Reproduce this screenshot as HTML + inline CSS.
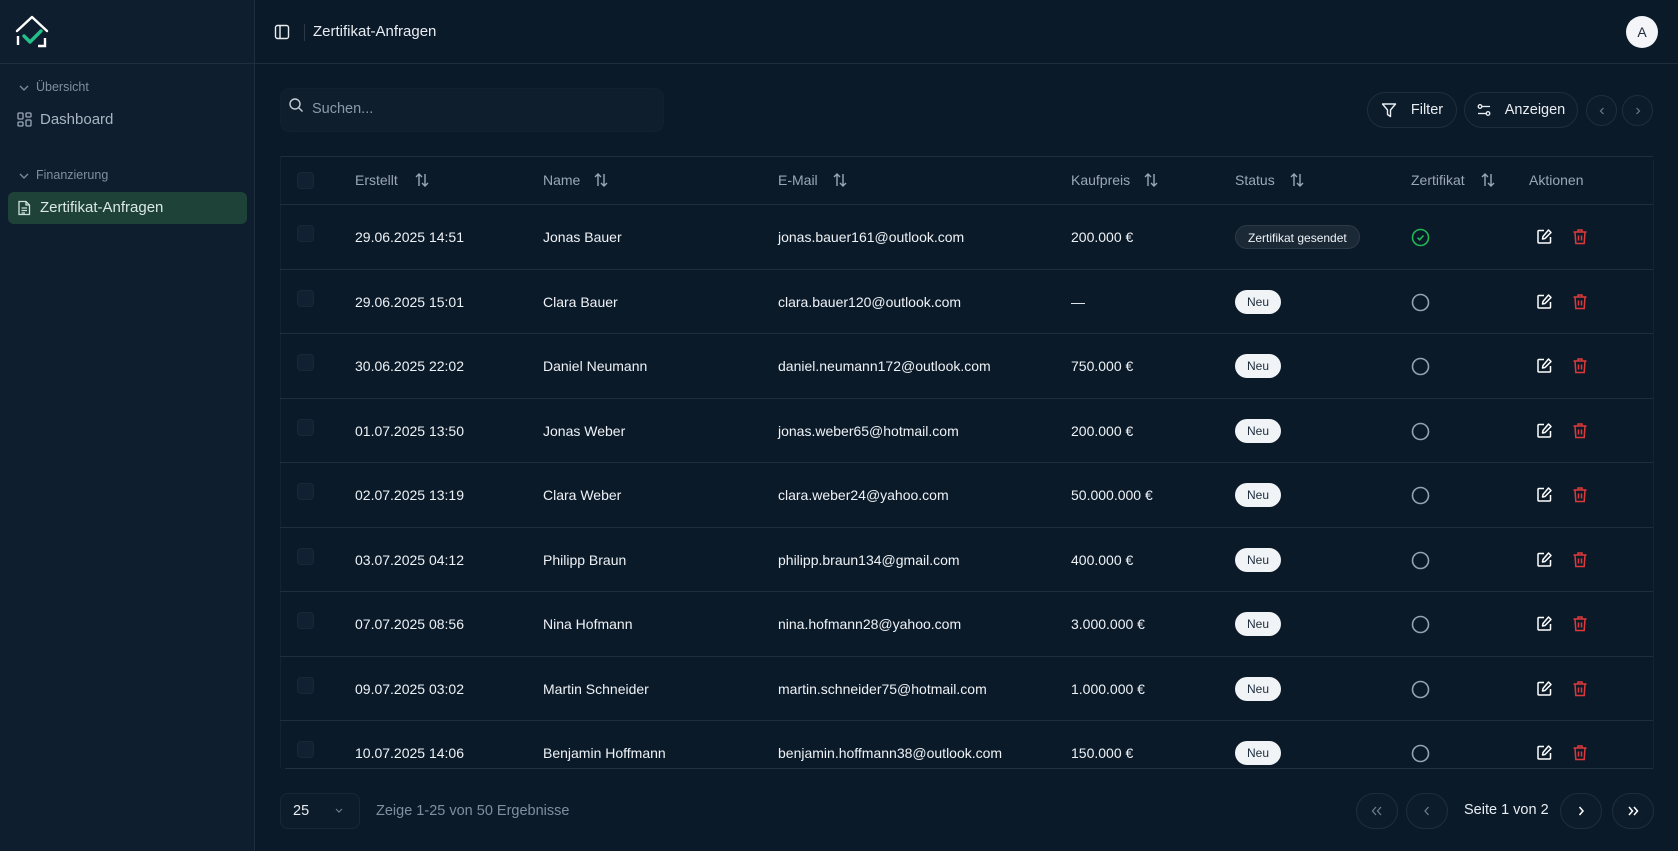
<!DOCTYPE html>
<html><head><meta charset="utf-8"><style>
*{box-sizing:border-box;margin:0;padding:0}
body{width:1678px;height:851px;background:#0b1a29;font-family:"Liberation Sans",sans-serif;color:#e8edf2;position:relative;overflow:hidden;font-size:14px}
.a{position:absolute}
.side{left:0;top:0;width:255px;height:851px;background:#0f1e2e;border-right:1px solid #1f2d3c}
.hdr{left:255px;top:0;right:0;height:64px;border-bottom:1px solid #1f2d3c}
.sline{left:0;top:63px;width:255px;height:1px;background:#1f2d3c}
.muted{color:#7f8ea0}
.btn{border:1px solid #1f2e3e;border-radius:18px;background:#0d1c2b;display:flex;align-items:center;justify-content:center}
.th{top:156px;height:48px;line-height:48px;color:#9aa7b6;font-size:14px}
.row{left:280px;width:1373px;height:64.5px;border-bottom:1px solid #1f2d3c}
.cell{top:0;height:64px;line-height:64px;font-size:14px;color:#eef2f6}
.cb{width:17px;height:17px;border-radius:4px;background:#122131;border:1px solid #182838}
.badge{background:#f1f4f7;color:#1d2b3a;border-radius:12px;height:24px;line-height:24px;padding:0 12px;font-size:12px;top:20px}
</style></head><body>
<div class="a side"></div>
<div class="a sline"></div>
<div class="a hdr"></div>
<svg class="a" style="left:14px;top:14px" width="36" height="36" viewBox="0 0 36 36" fill="none">
<path d="M3 17 L18 3 L33 17" stroke="#fff" stroke-width="2.4" stroke-linecap="round" stroke-linejoin="round"/>
<path d="M4 22 V31" stroke="#fff" stroke-width="2.4"/>
<path d="M31 24 V32 H24" stroke="#fff" stroke-width="2.4"/>
<path d="M10 22 L16 28 L27 17" stroke="#22c08a" stroke-width="3.4" stroke-linecap="round" stroke-linejoin="round"/>
</svg>
<svg class="a" style="left:18px;top:83px" width="12" height="10" viewBox="0 0 12 10"><path d="M2 3 L6 7 L10 3" stroke="#7f8ea0" stroke-width="1.3" fill="none"/></svg>
<div class="a muted" style="left:36px;top:80px;font-size:12.5px">Übersicht</div>
<svg class="a" style="left:17px;top:112px" width="15" height="15" viewBox="0 0 15 15" fill="none" stroke="#9aa7b6" stroke-width="1.3"><rect x="1" y="1" width="5" height="6" rx="1"/><rect x="9" y="1" width="5" height="4" rx="1"/><rect x="1" y="10" width="5" height="4" rx="1"/><rect x="9" y="8" width="5" height="6" rx="1"/></svg>
<div class="a" style="left:40px;top:111px;font-size:15px;color:#a9b5c2">Dashboard</div>
<svg class="a" style="left:18px;top:171px" width="12" height="10" viewBox="0 0 12 10"><path d="M2 3 L6 7 L10 3" stroke="#7f8ea0" stroke-width="1.3" fill="none"/></svg>
<div class="a muted" style="left:36px;top:168px;font-size:12.5px">Finanzierung</div>
<div class="a" style="left:8px;top:192px;width:239px;height:32px;background:#1e4238;border-radius:6px"></div>
<svg class="a" style="left:17px;top:200px" width="14" height="16" viewBox="0 0 14 16" fill="none" stroke="#cfe0da" stroke-width="1.3"><path d="M2 1.5 H9 L12.5 5 V14.5 H2 Z"/><path d="M9 1.5 V5 H12.5"/><path d="M4.5 8 H10 M4.5 10.5 H10 M4.5 13 H8"/></svg>
<div class="a" style="left:40px;top:199px;font-size:15px;color:#dbe8e3">Zertifikat-Anfragen</div>
<svg class="a" style="left:274px;top:24px" width="16" height="16" viewBox="0 0 16 16" fill="none" stroke="#e8edf2" stroke-width="1.4"><rect x="1.5" y="1.5" width="13" height="13" rx="2"/><path d="M6 1.5 V14.5"/></svg>
<div class="a" style="left:304px;top:24px;width:1px;height:17px;background:#2a3848"></div>
<div class="a" style="left:313px;top:23px;font-size:15px">Zertifikat-Anfragen</div>
<div class="a" style="left:1626px;top:16px;width:32px;height:32px;border-radius:50%;background:#f3f5f8;color:#1d2b3a;font-size:14px;text-align:center;line-height:32px">A</div>
<div class="a" style="left:280px;top:88px;width:384px;height:44px;background:#0f1e2d;border-radius:9px;border:1px solid #112131"></div>
<svg class="a" style="left:288px;top:97px" width="16" height="16" viewBox="0 0 16 16" fill="none" stroke="#c3ccd6" stroke-width="1.4"><circle cx="7" cy="7" r="5"/><path d="M11 11 L14.5 14.5"/></svg>
<div class="a" style="left:312px;top:101px;color:#8c99a8;font-size:14.5px">Suchen...</div>
<div class="a btn" style="left:1367px;top:92px;width:90px;height:36px;gap:14px;font-size:14.5px"><svg width="16" height="16" viewBox="0 0 16 16" fill="none" stroke="#e8edf2" stroke-width="1.4" stroke-linejoin="round"><path d="M1.5 2 H14.5 L9.5 8 V14.5 L6.5 12.5 V8 Z"/></svg>Filter</div>
<div class="a btn" style="left:1464px;top:92px;width:114px;height:36px;gap:14px;font-size:14.5px"><svg width="14" height="14" viewBox="0 0 14 14" fill="none" stroke="#e8edf2" stroke-width="1.3"><circle cx="3" cy="3.5" r="1.8"/><path d="M5 3.5 H13"/><circle cx="11" cy="10.5" r="1.8"/><path d="M1 10.5 H9"/></svg>Anzeigen</div>
<div class="a btn" style="left:1586px;top:95px;width:31px;height:31px"><svg width="10" height="10" viewBox="0 0 10 10"><path d="M6.5 2 L3.5 5 L6.5 8" stroke="#6c7a8a" stroke-width="1.2" fill="none"/></svg></div>
<div class="a btn" style="left:1622px;top:95px;width:31px;height:31px"><svg width="10" height="10" viewBox="0 0 10 10"><path d="M3.5 2 L6.5 5 L3.5 8" stroke="#6c7a8a" stroke-width="1.2" fill="none"/></svg></div>
<div class="a" style="left:280px;top:156px;width:1373px;height:1px;background:#1f2d3c"></div>
<div class="a" style="left:280px;top:156px;width:1px;height:612px;background:#15232f"></div>
<div class="a" style="left:1653px;top:160px;width:1px;height:608px;background:#15232f"></div>
<div class="a" style="left:280px;top:204px;width:1373px;height:1px;background:#1f2d3c"></div>
<div class="a cb" style="left:297px;top:172px"></div>
<div class="a th" style="left:355px">Erstellt</div>
<div class="a th" style="left:543px">Name</div>
<div class="a th" style="left:778px">E-Mail</div>
<div class="a th" style="left:1071px">Kaufpreis</div>
<div class="a th" style="left:1235px">Status</div>
<div class="a th" style="left:1411px">Zertifikat</div>
<div class="a th" style="left:1529px">Aktionen</div>
<svg class="a" style="left:414px;top:172px" width="16" height="16" viewBox="0 0 16 16" fill="none" stroke="#9aa7b6" stroke-width="1.4"><path d="M5 14 V2 M2 5 L5 2 L8 5 M11 2 V14 M8 11 L11 14 L14 11"/></svg>
<svg class="a" style="left:593px;top:172px" width="16" height="16" viewBox="0 0 16 16" fill="none" stroke="#9aa7b6" stroke-width="1.4"><path d="M5 14 V2 M2 5 L5 2 L8 5 M11 2 V14 M8 11 L11 14 L14 11"/></svg>
<svg class="a" style="left:832px;top:172px" width="16" height="16" viewBox="0 0 16 16" fill="none" stroke="#9aa7b6" stroke-width="1.4"><path d="M5 14 V2 M2 5 L5 2 L8 5 M11 2 V14 M8 11 L11 14 L14 11"/></svg>
<svg class="a" style="left:1143px;top:172px" width="16" height="16" viewBox="0 0 16 16" fill="none" stroke="#9aa7b6" stroke-width="1.4"><path d="M5 14 V2 M2 5 L5 2 L8 5 M11 2 V14 M8 11 L11 14 L14 11"/></svg>
<svg class="a" style="left:1289px;top:172px" width="16" height="16" viewBox="0 0 16 16" fill="none" stroke="#9aa7b6" stroke-width="1.4"><path d="M5 14 V2 M2 5 L5 2 L8 5 M11 2 V14 M8 11 L11 14 L14 11"/></svg>
<svg class="a" style="left:1480px;top:172px" width="16" height="16" viewBox="0 0 16 16" fill="none" stroke="#9aa7b6" stroke-width="1.4"><path d="M5 14 V2 M2 5 L5 2 L8 5 M11 2 V14 M8 11 L11 14 L14 11"/></svg>

<div class="a" style="left:280px;top:205px;width:1373px;height:563px;overflow:hidden">
<div style="position:relative">
<div class="a row" style="left:0;top:0"><div class="a cb" style="left:17px;top:20px"></div><div class="a cell" style="left:75px">29.06.2025 14:51</div><div class="a cell" style="left:263px">Jonas Bauer</div><div class="a cell" style="left:498px">jonas.bauer161@outlook.com</div><div class="a cell" style="left:791px">200.000 €</div><div class="a badge" style="left:955px;background:#1b2937;color:#eef2f6;border:1px solid #2c3a48">Zertifikat gesendet</div><svg class="a" style="left:1131px;top:23px" width="19" height="19" viewBox="0 0 19 19" fill="none" stroke="#1fb855" stroke-width="1.6"><circle cx="9.5" cy="9.5" r="8"/><path d="M6.5 9.7 L8.7 11.7 L12.5 7.5"/></svg><svg class="a" style="left:1256px;top:23px" width="17" height="17" viewBox="0 0 17 17" fill="none" stroke="#fff" stroke-width="1.5" stroke-linejoin="round"><path d="M8 2.5 H3 A1 1 0 0 0 2 3.5 V14 A1 1 0 0 0 3 15 H13.5 A1 1 0 0 0 14.5 14 V9"/><path d="M12.5 2 L15 4.5 L9 10.5 L6.5 11 L7 8.5 Z"/></svg><svg class="a" style="left:1292px;top:23px" width="16" height="17" viewBox="0 0 16 17" fill="none" stroke="#dc3a3a" stroke-width="1.5"><path d="M1.5 4 H14.5 M6 4 V2 H10 V4 M3 4 L3.8 15.5 H12.2 L13 4 M6.5 7.5 V12.5 M9.5 7.5 V12.5"/></svg></div>
<div class="a row" style="left:0;top:64.5px"><div class="a cb" style="left:17px;top:20px"></div><div class="a cell" style="left:75px">29.06.2025 15:01</div><div class="a cell" style="left:263px">Clara Bauer</div><div class="a cell" style="left:498px">clara.bauer120@outlook.com</div><div class="a cell" style="left:791px">—</div><div class="a badge" style="left:955px">Neu</div><svg class="a" style="left:1131px;top:23px" width="19" height="19" viewBox="0 0 19 19" fill="none" stroke="#94a3b0" stroke-width="1.6"><circle cx="9.5" cy="9.5" r="8"/></svg><svg class="a" style="left:1256px;top:23px" width="17" height="17" viewBox="0 0 17 17" fill="none" stroke="#fff" stroke-width="1.5" stroke-linejoin="round"><path d="M8 2.5 H3 A1 1 0 0 0 2 3.5 V14 A1 1 0 0 0 3 15 H13.5 A1 1 0 0 0 14.5 14 V9"/><path d="M12.5 2 L15 4.5 L9 10.5 L6.5 11 L7 8.5 Z"/></svg><svg class="a" style="left:1292px;top:23px" width="16" height="17" viewBox="0 0 16 17" fill="none" stroke="#dc3a3a" stroke-width="1.5"><path d="M1.5 4 H14.5 M6 4 V2 H10 V4 M3 4 L3.8 15.5 H12.2 L13 4 M6.5 7.5 V12.5 M9.5 7.5 V12.5"/></svg></div>
<div class="a row" style="left:0;top:129px"><div class="a cb" style="left:17px;top:20px"></div><div class="a cell" style="left:75px">30.06.2025 22:02</div><div class="a cell" style="left:263px">Daniel Neumann</div><div class="a cell" style="left:498px">daniel.neumann172@outlook.com</div><div class="a cell" style="left:791px">750.000 €</div><div class="a badge" style="left:955px">Neu</div><svg class="a" style="left:1131px;top:23px" width="19" height="19" viewBox="0 0 19 19" fill="none" stroke="#94a3b0" stroke-width="1.6"><circle cx="9.5" cy="9.5" r="8"/></svg><svg class="a" style="left:1256px;top:23px" width="17" height="17" viewBox="0 0 17 17" fill="none" stroke="#fff" stroke-width="1.5" stroke-linejoin="round"><path d="M8 2.5 H3 A1 1 0 0 0 2 3.5 V14 A1 1 0 0 0 3 15 H13.5 A1 1 0 0 0 14.5 14 V9"/><path d="M12.5 2 L15 4.5 L9 10.5 L6.5 11 L7 8.5 Z"/></svg><svg class="a" style="left:1292px;top:23px" width="16" height="17" viewBox="0 0 16 17" fill="none" stroke="#dc3a3a" stroke-width="1.5"><path d="M1.5 4 H14.5 M6 4 V2 H10 V4 M3 4 L3.8 15.5 H12.2 L13 4 M6.5 7.5 V12.5 M9.5 7.5 V12.5"/></svg></div>
<div class="a row" style="left:0;top:193.5px"><div class="a cb" style="left:17px;top:20px"></div><div class="a cell" style="left:75px">01.07.2025 13:50</div><div class="a cell" style="left:263px">Jonas Weber</div><div class="a cell" style="left:498px">jonas.weber65@hotmail.com</div><div class="a cell" style="left:791px">200.000 €</div><div class="a badge" style="left:955px">Neu</div><svg class="a" style="left:1131px;top:23px" width="19" height="19" viewBox="0 0 19 19" fill="none" stroke="#94a3b0" stroke-width="1.6"><circle cx="9.5" cy="9.5" r="8"/></svg><svg class="a" style="left:1256px;top:23px" width="17" height="17" viewBox="0 0 17 17" fill="none" stroke="#fff" stroke-width="1.5" stroke-linejoin="round"><path d="M8 2.5 H3 A1 1 0 0 0 2 3.5 V14 A1 1 0 0 0 3 15 H13.5 A1 1 0 0 0 14.5 14 V9"/><path d="M12.5 2 L15 4.5 L9 10.5 L6.5 11 L7 8.5 Z"/></svg><svg class="a" style="left:1292px;top:23px" width="16" height="17" viewBox="0 0 16 17" fill="none" stroke="#dc3a3a" stroke-width="1.5"><path d="M1.5 4 H14.5 M6 4 V2 H10 V4 M3 4 L3.8 15.5 H12.2 L13 4 M6.5 7.5 V12.5 M9.5 7.5 V12.5"/></svg></div>
<div class="a row" style="left:0;top:258px"><div class="a cb" style="left:17px;top:20px"></div><div class="a cell" style="left:75px">02.07.2025 13:19</div><div class="a cell" style="left:263px">Clara Weber</div><div class="a cell" style="left:498px">clara.weber24@yahoo.com</div><div class="a cell" style="left:791px">50.000.000 €</div><div class="a badge" style="left:955px">Neu</div><svg class="a" style="left:1131px;top:23px" width="19" height="19" viewBox="0 0 19 19" fill="none" stroke="#94a3b0" stroke-width="1.6"><circle cx="9.5" cy="9.5" r="8"/></svg><svg class="a" style="left:1256px;top:23px" width="17" height="17" viewBox="0 0 17 17" fill="none" stroke="#fff" stroke-width="1.5" stroke-linejoin="round"><path d="M8 2.5 H3 A1 1 0 0 0 2 3.5 V14 A1 1 0 0 0 3 15 H13.5 A1 1 0 0 0 14.5 14 V9"/><path d="M12.5 2 L15 4.5 L9 10.5 L6.5 11 L7 8.5 Z"/></svg><svg class="a" style="left:1292px;top:23px" width="16" height="17" viewBox="0 0 16 17" fill="none" stroke="#dc3a3a" stroke-width="1.5"><path d="M1.5 4 H14.5 M6 4 V2 H10 V4 M3 4 L3.8 15.5 H12.2 L13 4 M6.5 7.5 V12.5 M9.5 7.5 V12.5"/></svg></div>
<div class="a row" style="left:0;top:322.5px"><div class="a cb" style="left:17px;top:20px"></div><div class="a cell" style="left:75px">03.07.2025 04:12</div><div class="a cell" style="left:263px">Philipp Braun</div><div class="a cell" style="left:498px">philipp.braun134@gmail.com</div><div class="a cell" style="left:791px">400.000 €</div><div class="a badge" style="left:955px">Neu</div><svg class="a" style="left:1131px;top:23px" width="19" height="19" viewBox="0 0 19 19" fill="none" stroke="#94a3b0" stroke-width="1.6"><circle cx="9.5" cy="9.5" r="8"/></svg><svg class="a" style="left:1256px;top:23px" width="17" height="17" viewBox="0 0 17 17" fill="none" stroke="#fff" stroke-width="1.5" stroke-linejoin="round"><path d="M8 2.5 H3 A1 1 0 0 0 2 3.5 V14 A1 1 0 0 0 3 15 H13.5 A1 1 0 0 0 14.5 14 V9"/><path d="M12.5 2 L15 4.5 L9 10.5 L6.5 11 L7 8.5 Z"/></svg><svg class="a" style="left:1292px;top:23px" width="16" height="17" viewBox="0 0 16 17" fill="none" stroke="#dc3a3a" stroke-width="1.5"><path d="M1.5 4 H14.5 M6 4 V2 H10 V4 M3 4 L3.8 15.5 H12.2 L13 4 M6.5 7.5 V12.5 M9.5 7.5 V12.5"/></svg></div>
<div class="a row" style="left:0;top:387px"><div class="a cb" style="left:17px;top:20px"></div><div class="a cell" style="left:75px">07.07.2025 08:56</div><div class="a cell" style="left:263px">Nina Hofmann</div><div class="a cell" style="left:498px">nina.hofmann28@yahoo.com</div><div class="a cell" style="left:791px">3.000.000 €</div><div class="a badge" style="left:955px">Neu</div><svg class="a" style="left:1131px;top:23px" width="19" height="19" viewBox="0 0 19 19" fill="none" stroke="#94a3b0" stroke-width="1.6"><circle cx="9.5" cy="9.5" r="8"/></svg><svg class="a" style="left:1256px;top:23px" width="17" height="17" viewBox="0 0 17 17" fill="none" stroke="#fff" stroke-width="1.5" stroke-linejoin="round"><path d="M8 2.5 H3 A1 1 0 0 0 2 3.5 V14 A1 1 0 0 0 3 15 H13.5 A1 1 0 0 0 14.5 14 V9"/><path d="M12.5 2 L15 4.5 L9 10.5 L6.5 11 L7 8.5 Z"/></svg><svg class="a" style="left:1292px;top:23px" width="16" height="17" viewBox="0 0 16 17" fill="none" stroke="#dc3a3a" stroke-width="1.5"><path d="M1.5 4 H14.5 M6 4 V2 H10 V4 M3 4 L3.8 15.5 H12.2 L13 4 M6.5 7.5 V12.5 M9.5 7.5 V12.5"/></svg></div>
<div class="a row" style="left:0;top:451.5px"><div class="a cb" style="left:17px;top:20px"></div><div class="a cell" style="left:75px">09.07.2025 03:02</div><div class="a cell" style="left:263px">Martin Schneider</div><div class="a cell" style="left:498px">martin.schneider75@hotmail.com</div><div class="a cell" style="left:791px">1.000.000 €</div><div class="a badge" style="left:955px">Neu</div><svg class="a" style="left:1131px;top:23px" width="19" height="19" viewBox="0 0 19 19" fill="none" stroke="#94a3b0" stroke-width="1.6"><circle cx="9.5" cy="9.5" r="8"/></svg><svg class="a" style="left:1256px;top:23px" width="17" height="17" viewBox="0 0 17 17" fill="none" stroke="#fff" stroke-width="1.5" stroke-linejoin="round"><path d="M8 2.5 H3 A1 1 0 0 0 2 3.5 V14 A1 1 0 0 0 3 15 H13.5 A1 1 0 0 0 14.5 14 V9"/><path d="M12.5 2 L15 4.5 L9 10.5 L6.5 11 L7 8.5 Z"/></svg><svg class="a" style="left:1292px;top:23px" width="16" height="17" viewBox="0 0 16 17" fill="none" stroke="#dc3a3a" stroke-width="1.5"><path d="M1.5 4 H14.5 M6 4 V2 H10 V4 M3 4 L3.8 15.5 H12.2 L13 4 M6.5 7.5 V12.5 M9.5 7.5 V12.5"/></svg></div>
<div class="a row" style="left:0;top:516px"><div class="a cb" style="left:17px;top:20px"></div><div class="a cell" style="left:75px">10.07.2025 14:06</div><div class="a cell" style="left:263px">Benjamin Hoffmann</div><div class="a cell" style="left:498px">benjamin.hoffmann38@outlook.com</div><div class="a cell" style="left:791px">150.000 €</div><div class="a badge" style="left:955px">Neu</div><svg class="a" style="left:1131px;top:23px" width="19" height="19" viewBox="0 0 19 19" fill="none" stroke="#94a3b0" stroke-width="1.6"><circle cx="9.5" cy="9.5" r="8"/></svg><svg class="a" style="left:1256px;top:23px" width="17" height="17" viewBox="0 0 17 17" fill="none" stroke="#fff" stroke-width="1.5" stroke-linejoin="round"><path d="M8 2.5 H3 A1 1 0 0 0 2 3.5 V14 A1 1 0 0 0 3 15 H13.5 A1 1 0 0 0 14.5 14 V9"/><path d="M12.5 2 L15 4.5 L9 10.5 L6.5 11 L7 8.5 Z"/></svg><svg class="a" style="left:1292px;top:23px" width="16" height="17" viewBox="0 0 16 17" fill="none" stroke="#dc3a3a" stroke-width="1.5"><path d="M1.5 4 H14.5 M6 4 V2 H10 V4 M3 4 L3.8 15.5 H12.2 L13 4 M6.5 7.5 V12.5 M9.5 7.5 V12.5"/></svg></div>
</div></div>
<div class="a" style="left:285px;top:768px;width:1368px;height:1px;background:#22303f"></div>
<div class="a" style="left:280px;top:793px;width:80px;height:36px;border:1px solid #182838;border-radius:8px;background:#0d1c2b"></div>
<div class="a" style="left:293px;top:803px;font-size:14.5px">25</div>
<svg class="a" style="left:333px;top:806px" width="12" height="10" viewBox="0 0 12 10"><path d="M3 3 L6 6 L9 3" stroke="#6c7a8a" stroke-width="1.2" fill="none"/></svg>
<div class="a" style="left:376px;top:803px;font-size:14.5px;color:#7f8ea0">Zeige 1-25 von 50 Ergebnisse</div>
<div class="a btn" style="left:1356px;top:793px;width:42px;height:36px"><svg width="14" height="12" viewBox="0 0 14 12" fill="none" stroke="#6c7a8a" stroke-width="1.3"><path d="M6 2 L2.5 6 L6 10 M11 2 L7.5 6 L11 10"/></svg></div>
<div class="a btn" style="left:1406px;top:793px;width:42px;height:36px"><svg width="10" height="12" viewBox="0 0 10 12"><path d="M6.5 2 L3 6 L6.5 10" stroke="#6c7a8a" stroke-width="1.3" fill="none"/></svg></div>
<div class="a" style="left:1464px;top:802px;font-size:14.5px">Seite 1 von 2</div>
<div class="a btn" style="left:1560px;top:793px;width:42px;height:36px"><svg width="10" height="12" viewBox="0 0 10 12"><path d="M3.5 2 L7 6 L3.5 10" stroke="#fff" stroke-width="1.5" fill="none"/></svg></div>
<div class="a btn" style="left:1612px;top:793px;width:42px;height:36px"><svg width="14" height="12" viewBox="0 0 14 12" fill="none" stroke="#fff" stroke-width="1.5"><path d="M3 2 L6.5 6 L3 10 M8 2 L11.5 6 L8 10"/></svg></div>
</body></html>
